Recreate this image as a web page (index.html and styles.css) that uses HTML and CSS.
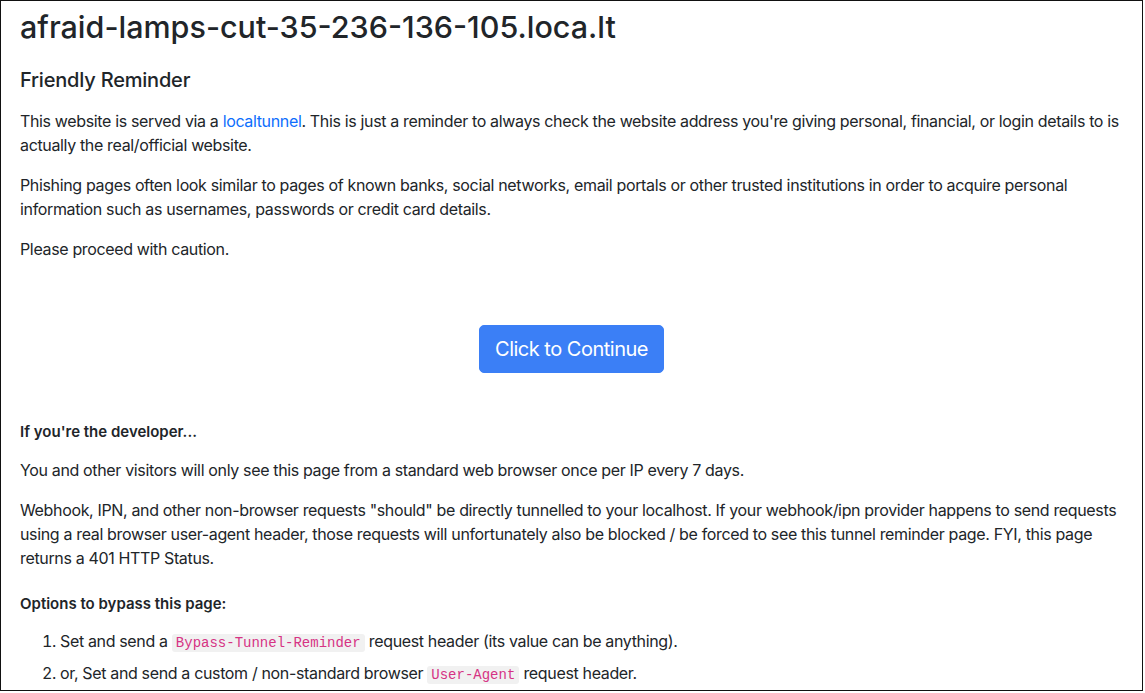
FILE: index.html
```html
<!DOCTYPE html>
<html lang="en">
<head>
<meta charset="utf-8">
<title>afraid-lamps-cut-35-236-136-105.loca.lt</title>
<link rel="stylesheet" href="styles.css">
</head>
<body>
<div class="frame">
  <main class="page">
    <h1 class="title">afraid-lamps-cut-35-236-136-105.loca.lt</h1>
    <h5 class="subtitle">Friendly Reminder</h5>
    <p>This website is served via a <a href="#">localtunnel</a>. This is just a reminder to always check the website address you're giving personal, financial, or login details to is actually the real/official website.</p>
    <p>Phishing pages often look similar to pages of known banks, social networks, email portals or other trusted institutions in order to acquire personal information such as usernames, passwords or credit card details.</p>
    <p>Please proceed with caution.</p>
    <div class="actions">
      <button class="btn-primary" type="button">Click to Continue</button>
    </div>
    <h6 class="dev-title">If you're the developer...</h6>
    <p>You and other visitors will only see this page from a standard web browser once per IP every 7 days.</p>
    <p>Webhook, IPN, and other non-browser requests "should" be directly tunnelled to your localhost. If your webhook/ipn provider happens to send requests using a real browser user-agent header, those requests will unfortunately also be blocked / be forced to see this tunnel reminder page. FYI, this page returns a 401 HTTP Status.</p>
    <h6 class="dev-title options">Options to bypass this page:</h6>
    <ol class="options-list">
      <li>Set and send a <code>Bypass-Tunnel-Reminder</code> request header (its value can be anything).</li>
      <li>or, Set and send a custom / non-standard browser <code>User-Agent</code> request header.</li>
    </ol>
  </main>
</div>
</body>
</html>
```

FILE: styles.css
```css
html, body {
  margin: 0;
  padding: 0;
  background: #ffffff;
}

body {
  font-family: Inter, "Noto Sans", "Liberation Sans", sans-serif;
  font-size: 16px;
  line-height: 24px;
  letter-spacing: -0.35px;
  color: #212529;
}

.frame {
  box-sizing: border-box;
  width: 1143px;
  height: 691px;
  border: 1.5px solid #111;
  overflow: hidden;
}

.page {
  padding: 9px 19px 0 19px;
}

.title {
  margin: 0 0 24px 0;
  font-size: 30.5px;
  font-weight: 500;
  line-height: 34px;
  letter-spacing: 0;
}

.subtitle {
  margin: 0 0 17px 0;
  font-size: 20px;
  font-weight: 500;
  line-height: 24px;
  letter-spacing: -0.2px;
}

p {
  margin: 0 0 16px 0;
}

a {
  color: #0d6efd;
  text-decoration: none;
}

.actions {
  display: flex;
  justify-content: center;
  padding-top: 48px;
  margin-bottom: 49px;
}

.btn-primary {
  font-family: inherit;
  font-size: 20px;
  line-height: 30px;
  letter-spacing: -0.5px;
  padding: 8px 15px;
  color: #fff;
  background: #3b7ff6;
  border: 1px solid #3b7ff6;
  border-radius: 5px;
  cursor: pointer;
}

.dev-title {
  margin: 0 0 16px 0;
  font-size: 15px;
  font-weight: 600;
  line-height: 20px;
  letter-spacing: 0;
}

.options {
  margin-top: 24px;
  margin-bottom: 15px;
}

.options-list {
  margin: 0;
  padding-left: 40px;
}

.options-list li {
  margin-bottom: 8px;
}

code {
  font-family: "Liberation Mono", "Courier New", monospace;
  font-size: 14px;
  line-height: 1;
  letter-spacing: 0;
  color: #d63384;
  background: #f1f1f1;
  padding: 1px 4px;
  border-radius: 3px;
}
```
